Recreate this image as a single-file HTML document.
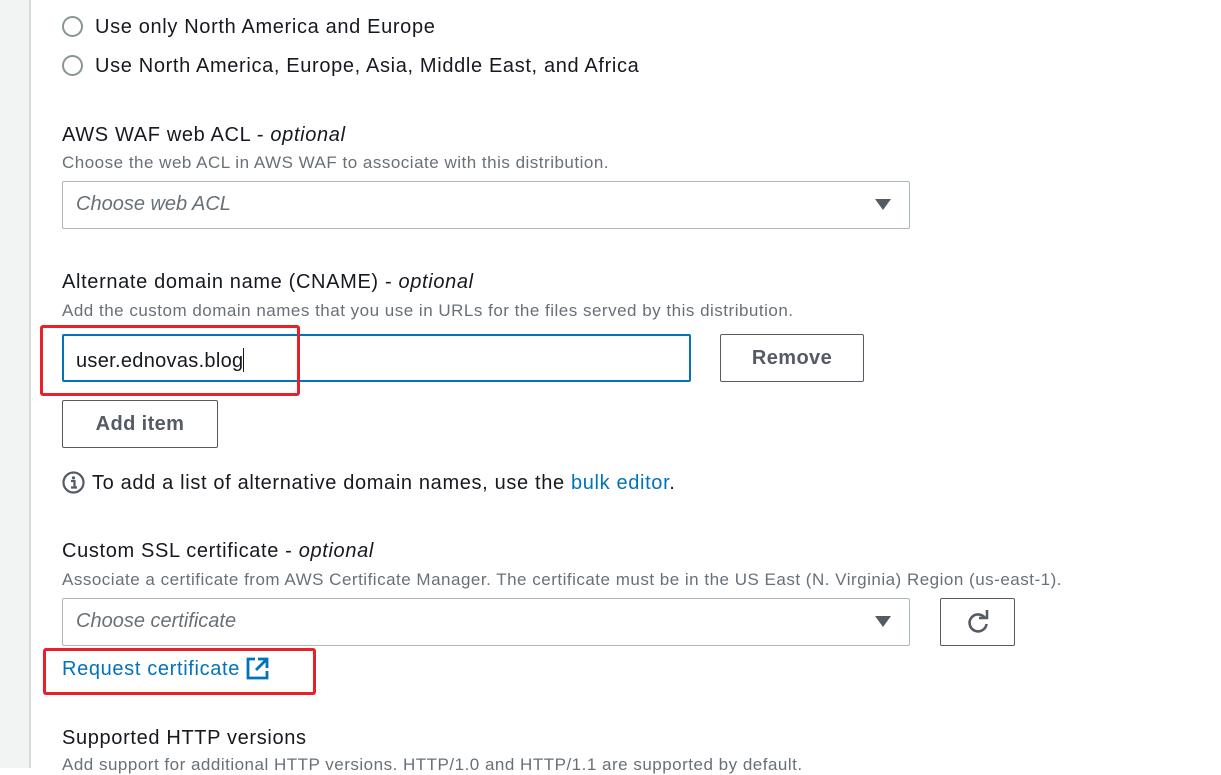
<!DOCTYPE html>
<html><head><meta charset="utf-8"><style>
*{margin:0;padding:0;box-sizing:border-box}
body{width:1221px;height:768px;overflow:hidden;background:#fff;font-family:"Liberation Sans",Arial,sans-serif;color:#16191f;position:relative}
.side{position:absolute;left:0;top:0;width:31px;height:768px;background:#f2f3f3;border-right:2px solid #d5dbdb}
.a{position:absolute;white-space:nowrap}
.t20{font-size:20px;line-height:24px;letter-spacing:0.65px}
.d{font-size:17px;line-height:20px;color:#687078;letter-spacing:0.5px}
.radio{position:absolute;width:21px;height:21px;border:2px solid #879596;border-radius:50%}
.box{position:absolute;border:1px solid #aab7b8;border-radius:2px;background:#fff}
.ph{font-style:italic;color:#687078;font-size:20px}
.arrow{position:absolute;width:0;height:0;border-left:8px solid transparent;border-right:8px solid transparent;border-top:11px solid #545b64}
.btn{position:absolute;border:1px solid #545b64;border-radius:2px;background:#fff;font-weight:bold;color:#545b64;font-size:20px;letter-spacing:0.4px;display:flex;align-items:center;justify-content:center}
.red{position:absolute;border:3px solid #e8202a;border-radius:3px}
a{color:#0073bb;text-decoration:none}
</style></head><body>
<div class="side"></div>
<div class="radio" style="left:62px;top:16px"></div>
<div class="a t20" style="left:95px;top:15px">Use only North America and Europe</div>
<div class="radio" style="left:62px;top:55px"></div>
<div class="a t20" style="left:95px;top:54px">Use North America, Europe, Asia, Middle East, and Africa</div>

<div class="a t20" style="left:62px;top:123px">AWS WAF web ACL - <i>optional</i></div>
<div class="a d" style="left:62px;top:153px">Choose the web ACL in AWS WAF to associate with this distribution.</div>
<div class="box" style="left:62px;top:181px;width:848px;height:48px"><span class="a ph" style="left:13px;top:11px">Choose web ACL</span></div>
<div class="arrow" style="left:875px;top:199px"></div>

<div class="a t20" style="left:62px;top:270px">Alternate domain name (CNAME) - <i>optional</i></div>
<div class="a d" style="left:62px;top:301px">Add the custom domain names that you use in URLs for the files served by this distribution.</div>
<div class="box" style="left:62px;top:334px;width:629px;height:48px;border:2px solid #0073bb"><span class="a" style="left:12px;top:12px;font-size:20px;letter-spacing:0.3px">user.ednovas.blog<span style="display:inline-block;width:1px;height:24px;background:#16191f;vertical-align:-5px"></span></span></div>
<div class="btn" style="left:720px;top:334px;width:144px;height:48px">Remove</div>
<div class="red" style="left:40px;top:325px;width:260px;height:71px"></div>
<div class="btn" style="left:62px;top:400px;width:156px;height:48px">Add item</div>

<svg class="a" style="left:62px;top:471px" width="24" height="24" viewBox="0 0 24 24"><circle cx="11.5" cy="11.5" r="10" fill="none" stroke="#545b64" stroke-width="2.2"/><circle cx="11.5" cy="6.8" r="1.6" fill="#545b64"/><path d="M9 10h3.5v6.5M9 16.5h6" fill="none" stroke="#545b64" stroke-width="2.2"/></svg>
<div class="a t20" style="left:92px;top:471px">To add a list of alternative domain names, use the <a>bulk editor</a>.</div>

<div class="a t20" style="left:62px;top:539px">Custom SSL certificate - <i>optional</i></div>
<div class="a d" style="left:62px;top:570px">Associate a certificate from AWS Certificate Manager. The certificate must be in the US East (N. Virginia) Region (us-east-1).</div>
<div class="box" style="left:62px;top:598px;width:848px;height:48px"><span class="a ph" style="left:13px;top:11px">Choose certificate</span></div>
<div class="arrow" style="left:875px;top:616px"></div>
<div class="btn" style="left:940px;top:598px;width:75px;height:48px"><svg width="26" height="26" viewBox="0 0 26 26"><path d="M20 9A8.5 8.5 0 1 0 21.5 15" fill="none" stroke="#545b64" stroke-width="2.6"/><path d="M14 9h8V1" fill="none" stroke="#545b64" stroke-width="2.6"/></svg></div>

<div class="a t20" style="left:62px;top:657px"><a>Request certificate</a></div>
<svg class="a" style="left:246px;top:657px" width="23" height="23" viewBox="0 0 23 23"><path d="M9 2H2v19h19v-7" fill="none" stroke="#0073bb" stroke-width="2.8"/><path d="M12 2h9v9M21 2L10 13" fill="none" stroke="#0073bb" stroke-width="2.8"/></svg>
<div class="red" style="left:43px;top:648px;width:273px;height:47px"></div>

<div class="a t20" style="left:62px;top:726px">Supported HTTP versions</div>
<div class="a d" style="left:62px;top:755px">Add support for additional HTTP versions. HTTP/1.0 and HTTP/1.1 are supported by default.</div>
</body></html>
